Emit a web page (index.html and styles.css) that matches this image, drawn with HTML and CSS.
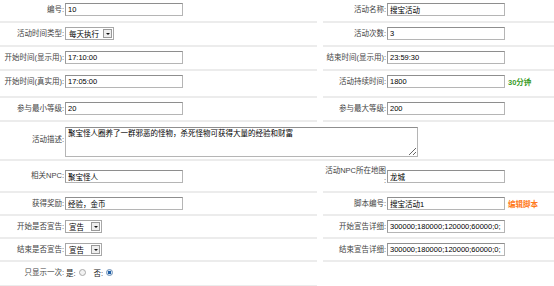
FILE: index.html
```html
<!DOCTYPE html>
<html lang="zh-CN">
<head>
  <meta charset="UTF-8" />
  <title>活动编辑</title>
  <link rel="stylesheet" href="styles.css">
</head>
<body>
  <div class="form">
    <div class="row first">
      <div class="cell label">编号:</div>
      <div class="cell field"><input class="text" value="10"></div>
      <div class="cell label right">活动名称:</div>
      <div class="cell field"><input class="text" value="搜宝活动"></div>
    </div>

    <div class="row">
      <div class="cell label">活动时间类型:</div>
      <div class="cell field">
        <span class="select wide"><span class="select-text">每天执行</span><span class="select-btn"></span></span>
      </div>
      <div class="cell label right">活动次数:</div>
      <div class="cell field"><input class="text" value="3"></div>
    </div>

    <div class="row">
      <div class="cell label">开始时间(显示用):</div>
      <div class="cell field"><input class="text" value="17:10:00"></div>
      <div class="cell label right">结束时间(显示用):</div>
      <div class="cell field"><input class="text" value="23:59:30"></div>
    </div>

    <div class="row roomy">
      <div class="cell label">开始时间(真实用):</div>
      <div class="cell field"><input class="text" value="17:05:00"></div>
      <div class="cell label right">活动持续时间:</div>
      <div class="cell field"><input class="text" value="1800"><span class="note green">30分钟</span></div>
    </div>

    <div class="row">
      <div class="cell label">参与最小等级:</div>
      <div class="cell field"><input class="text" value="20"></div>
      <div class="cell label right">参与最大等级:</div>
      <div class="cell field"><input class="text" value="200"></div>
    </div>

    <div class="row">
      <div class="cell label">活动描述:</div>
      <div class="cell field span">
        <textarea class="desc">聚宝怪人圈养了一群邪恶的怪物，杀死怪物可获得大量的经验和财富</textarea>
      </div>
    </div>

    <div class="row tall">
      <div class="cell label">相关NPC:</div>
      <div class="cell field"><input class="text" value="聚宝怪人"></div>
      <div class="cell label right">活动NPC所在地图<br>:</div>
      <div class="cell field"><input class="text" value="龙城"></div>
    </div>

    <div class="row tight">
      <div class="cell label">获得奖励:</div>
      <div class="cell field"><input class="text" value="经验，金币"></div>
      <div class="cell label right">脚本编号:</div>
      <div class="cell field"><input class="text" value="搜宝活动1"><span class="note orange">编辑脚本</span></div>
    </div>

    <div class="row tight">
      <div class="cell label">开始是否宣告:</div>
      <div class="cell field">
        <span class="select"><span class="select-text">宣告</span><span class="select-btn"></span></span>
      </div>
      <div class="cell label right">开始宣告详细:</div>
      <div class="cell field"><input class="text" value="300000;180000;120000;60000;0;"></div>
    </div>

    <div class="row tight">
      <div class="cell label">结束是否宣告:</div>
      <div class="cell field">
        <span class="select"><span class="select-text">宣告</span><span class="select-btn"></span></span>
      </div>
      <div class="cell label right">结束宣告详细:</div>
      <div class="cell field"><input class="text" value="300000;180000;120000;60000;0;"></div>
    </div>

    <div class="row last">
      <div class="cell label">只显示一次:</div>
      <div class="cell field">
        <span class="radio-label">是:</span><span class="radio"></span>
        <span class="radio-label">否:</span><span class="radio checked"></span>
      </div>
    </div>
  </div>
</body>
</html>
```

FILE: styles.css
```css
body {
  margin: 0;
  background: #fff;
  font-family: 'Liberation Sans', 'Noto Sans CJK SC', sans-serif;
  font-size: 7.5px;
  color: #444;
}

.row {
  display: grid;
  grid-template-columns: 65px 252px 70px 1fr;
}

.cell {
  display: flex;
  align-items: center;
  padding: 4px 0 5px;
  border-bottom: 2px solid #ececec;
  min-height: 13px;
}

.row.first .cell {
  padding-top: 3px;
}

.row.roomy .cell {
  padding-bottom: 8px;
}

.row.tight .cell {
  padding-bottom: 4px;
}

.label {
  justify-content: flex-end;
  text-align: right;
  padding-right: 1px;
  line-height: 10px;
}

.label.right {
  margin-left: 6px;
  padding-right: 1px;
}

.row.tall .cell {
  padding-top: 5px;
  padding-bottom: 5px;
}

.field.span {
  grid-column: 2 / 5;
  padding-top: 5px;
  padding-bottom: 2px;
}

.row.last .cell {
  padding-bottom: 6px;
}

.text {
  box-sizing: border-box;
  width: 118px;
  height: 13px;
  margin: 0;
  padding: 0 2px;
  border: 1px solid #b5b5b5;
  border-top-color: #8e8e8e;
  border-left-color: #9a9a9a;
  font-family: 'Liberation Sans', 'Noto Sans CJK SC', sans-serif;
  font-size: 7.5px;
  color: #000;
  background: #fff;
}

.desc {
  box-sizing: border-box;
  width: 353px;
  height: 30px;
  margin: 0;
  padding: 1px 2px;
  border: 1px solid #b5b5b5;
  border-top-color: #8e8e8e;
  font-family: 'Liberation Sans', 'Noto Sans CJK SC', sans-serif;
  font-size: 7.5px;
  line-height: 10px;
  color: #000;
}

.select {
  box-sizing: border-box;
  display: inline-flex;
  align-items: center;
  justify-content: space-between;
  width: 37px;
  height: 13px;
  border: 1px solid #a8a8a8;
  padding: 0 1px 0 3px;
  color: #000;
  background: #fff;
}

.select.wide {
  width: 49px;
}

.select-btn {
  box-sizing: border-box;
  position: relative;
  width: 9px;
  height: 9px;
  border: 1px solid #999;
  background: #eee;
}

.select-btn::after {
  content: '';
  position: absolute;
  left: 1.5px;
  top: 2.5px;
  border-left: 2.5px solid transparent;
  border-right: 2.5px solid transparent;
  border-top: 2.5px solid #111;
}

.note {
  margin-left: 3px;
  font-weight: bold;
}

.green {
  color: #3c9d2a;
}

.orange {
  color: #ff7a1a;
}

.radio-label {
  margin-left: 3px;
  color: #222;
}

.radio-label:first-child {
  margin-left: 1px;
}

.radio {
  box-sizing: border-box;
  width: 7px;
  height: 7px;
  margin-left: 3px;
  margin-right: 5px;
  border-radius: 50%;
  border: 1px solid #a9a9a9;
  background: #f2f2f2;
}

.radio.checked {
  border-color: #6d8fb5;
  background: radial-gradient(circle, #1f5fa8 0 1.6px, #dbe6f2 2px);
}
```
